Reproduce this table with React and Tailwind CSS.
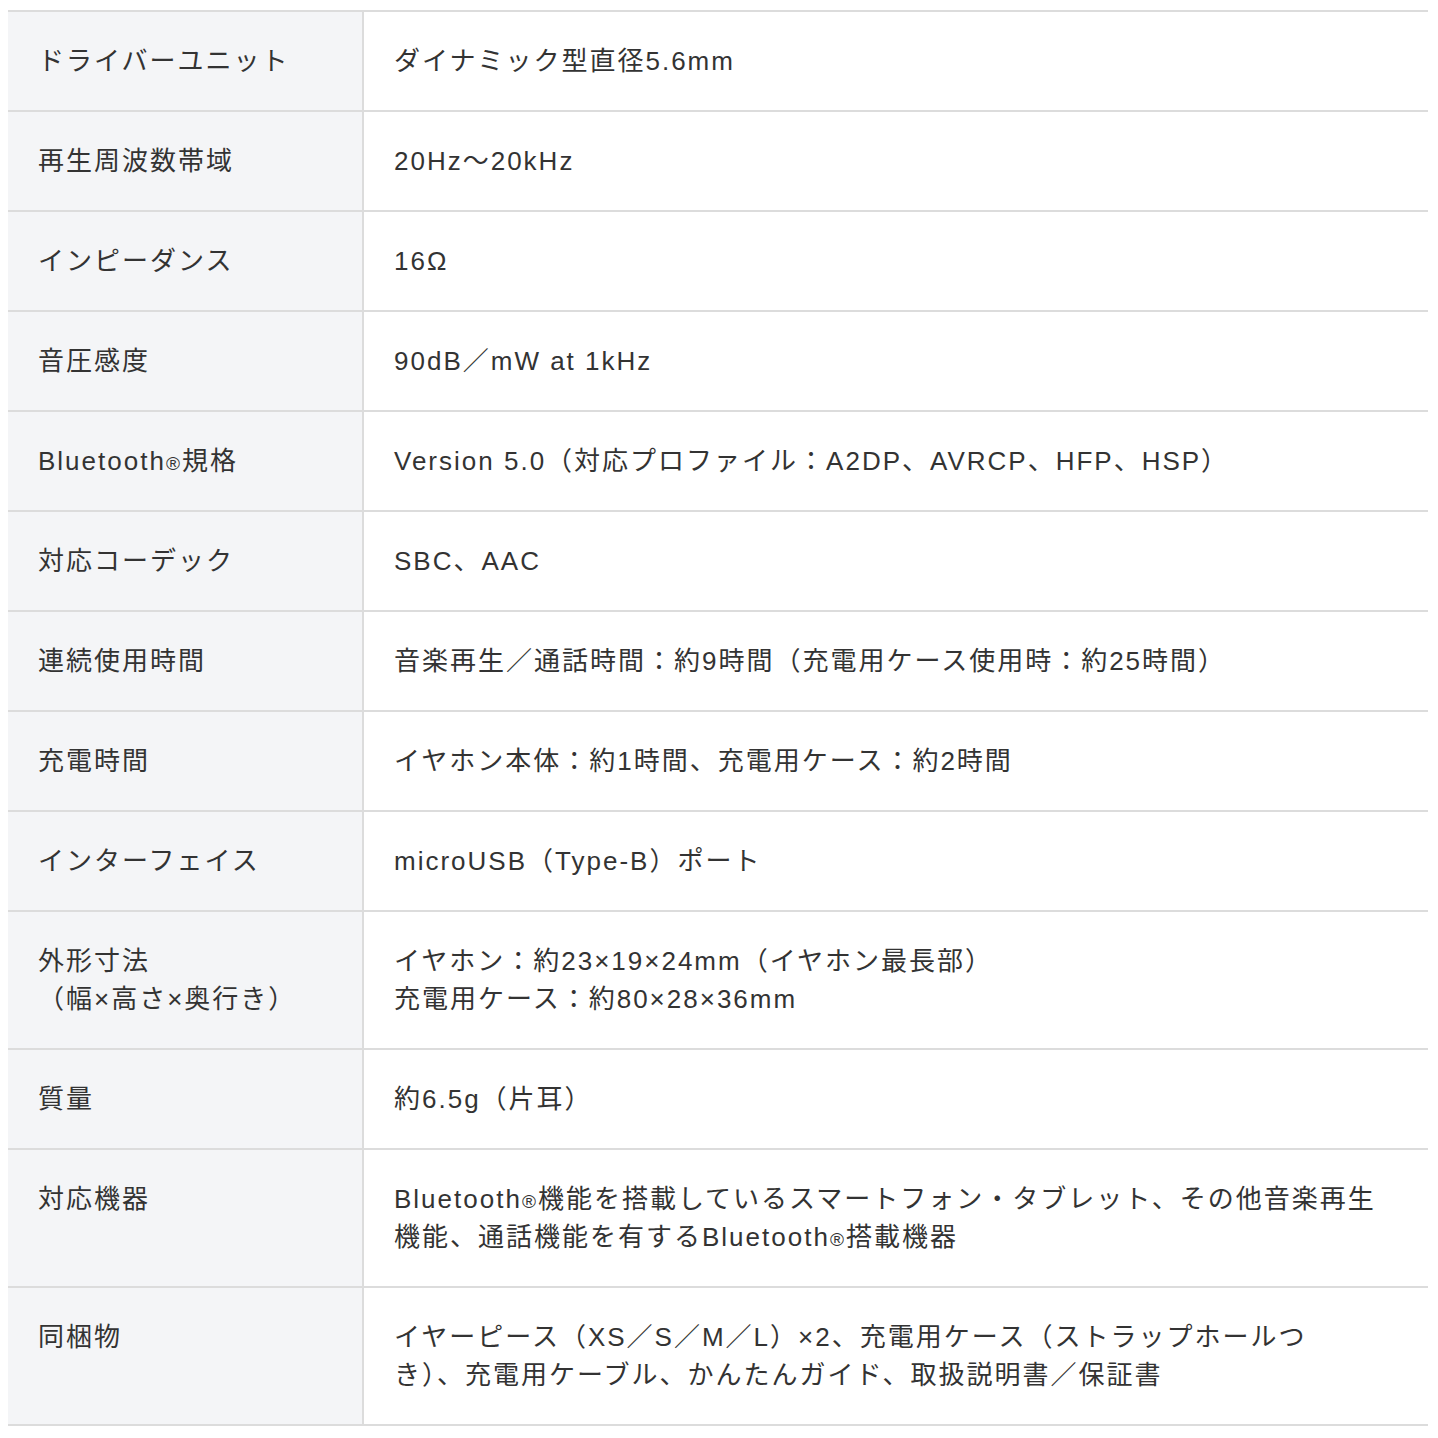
import React from "react";

const R = () => <span className="text-[19px] leading-none">®</span>;

const rows = [
  ["ドライバーユニット", "ダイナミック型直径5.6mm"],
  ["再生周波数帯域", "20Hz〜20kHz"],
  ["インピーダンス", "16Ω"],
  ["音圧感度", "90dB／mW at 1kHz"],
  [<>Bluetooth<R />規格</>, "Version 5.0（対応プロファイル：A2DP、AVRCP、HFP、HSP）"],
  ["対応コーデック", "SBC、AAC"],
  ["連続使用時間", "音楽再生／通話時間：約9時間（充電用ケース使用時：約25時間）"],
  ["充電時間", "イヤホン本体：約1時間、充電用ケース：約2時間"],
  ["インターフェイス", "microUSB（Type-B）ポート"],
  [<>外形寸法<br />（幅×高さ×奥行き）</>, <>イヤホン：約23×19×24mm（イヤホン最長部）<br />充電用ケース：約80×28×36mm</>],
  ["質量", "約6.5g（片耳）"],
  ["対応機器", <>Bluetooth<R />機能を搭載しているスマートフォン・タブレット、その他音楽再生<br />機能、通話機能を有するBluetooth<R />搭載機器</>],
  ["同梱物", <>イヤーピース（XS／S／M／L）×2、充電用ケース（ストラップホールつ<br />き）、充電用ケーブル、かんたんガイド、取扱説明書／保証書</>],
];

export default function App() {
  return (
    <div className="bg-white w-[1438px] min-h-[1438px] pt-[10px] px-[8px]" style={{ fontFamily: '"Liberation Sans", "Noto Sans CJK JP", sans-serif' }}>
      <div className="w-[1420px] border-t-2 border-[#dcdcdc]">
        {rows.map(([k, v], i) => (
          <div key={i} className="flex border-b-2 border-[#dcdcdc] text-[26px] leading-[38px] text-[#333] tracking-[2px]">
            <div className="w-[356px] shrink-0 bg-[#f4f5f7] border-r-2 border-[#dcdcdc] px-[30px] pt-[30px] pb-[30px]">{k}</div>
            <div className="flex-1 px-[30px] pt-[30px] pb-[30px] whitespace-nowrap">{v}</div>
          </div>
        ))}
      </div>
    </div>
  );
}
